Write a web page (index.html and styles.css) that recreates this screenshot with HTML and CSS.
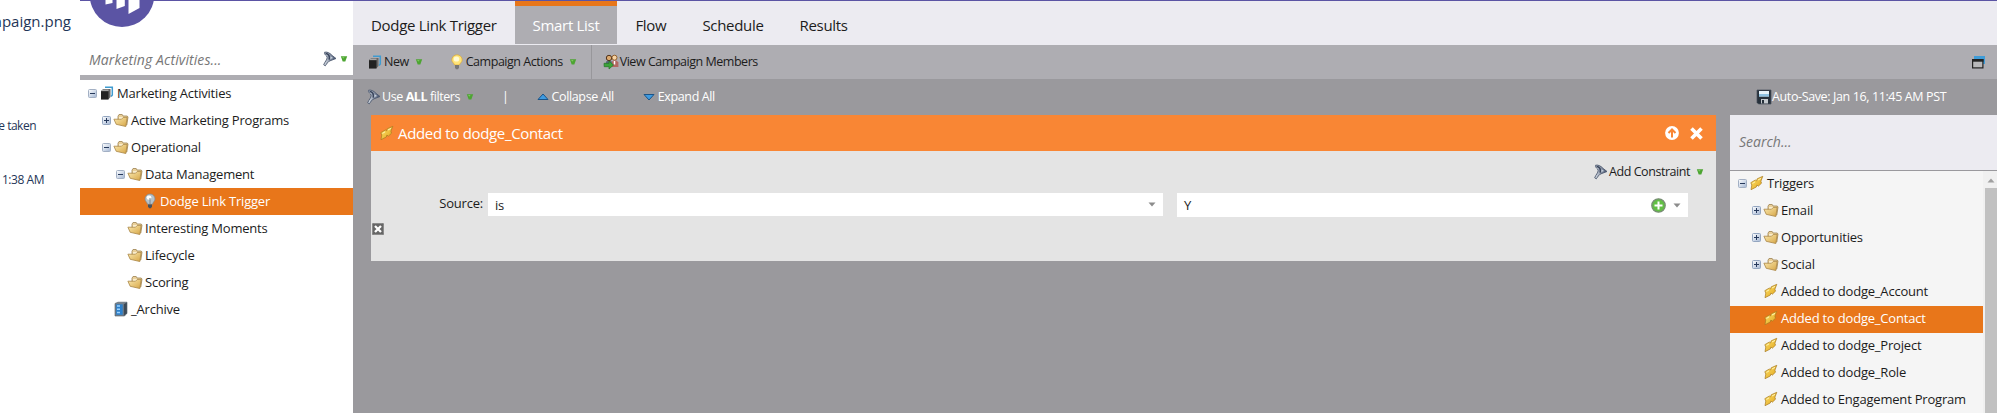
FILE: index.html
```html
<!DOCTYPE html>
<html lang="en">
<head>
<meta charset="utf-8">
<title>Dodge Link Trigger - Smart List</title>
<link rel="stylesheet" href="styles.css">
</head>
<body>
<svg width="0" height="0" class="defs">
  <defs>
    <linearGradient id="gf" x1="0" y1="0" x2="1" y2="1"><stop offset="0" stop-color="#fbeab0"/><stop offset="1" stop-color="#d6a545"/></linearGradient>
    <linearGradient id="gb" x1="0" y1="0" x2="1" y2="1"><stop offset="0" stop-color="#ffe36a"/><stop offset="1" stop-color="#dfa21c"/></linearGradient>
    <linearGradient id="ge" x1="0" y1="0" x2="1" y2="1"><stop offset="0" stop-color="#fff"/><stop offset="1" stop-color="#a3b6d3"/></linearGradient>
    <linearGradient id="gn" x1="0" y1="0" x2="1" y2="0"><stop offset="0" stop-color="#dfe5ec"/><stop offset="1" stop-color="#3c4a68"/></linearGradient>
    <symbol id="minus" viewBox="0 0 9 9"><rect x=".5" y=".5" width="8" height="8" rx="1" fill="url(#ge)" stroke="#a3b0c4"/><path d="M2 4.500h5" stroke="#26395c"/></symbol>
    <symbol id="plus" viewBox="0 0 9 9"><rect x=".5" y=".5" width="8" height="8" rx="1" fill="url(#ge)" stroke="#94a6c0"/><path d="M2 4.500h5M4.500 2v5" stroke="#26395c"/></symbol>
    <symbol id="folder" viewBox="0 0 16 16"><path d="M5 11V4.200l1-1.700h3.200l.8 1.500h4.200l.8 1-1.200 8z" fill="#ead09a" stroke="#9d8350" stroke-width=".8"/><path d="M6 5.200h7l-.5 4H6z" fill="#fff7dc"/><path d="M.9 7.200h7.600l1.700-1.700 4-.2-1.400 9.200-9.600-2.200z" fill="url(#gf)" stroke="#a98545" stroke-width=".8"/></symbol>
    <symbol id="bolt" viewBox="0 0 16 16"><path d="M13.800 1.300L8.200 3.800 7.500 5.900 6.300 5 1.800 7.700 2.800 10 2 14.700 7.300 12 7.900 10 9.300 11.200 12.500 8.200 11.900 6.200z" fill="url(#gb)" stroke="#a77a20" stroke-width=".7" stroke-linejoin="round"/><path d="M3.500 8.400l2.500-1.500M9 5l3-1.600" stroke="#fff6b8"/></symbol>
    <symbol id="book" viewBox="0 0 16 16"><path d="M6 2.200h7.300V10l-1.200 1.500" fill="none" stroke="#3f9bd0" stroke-width="1.500"/><path d="M2 6l2-2h7.500v8L9.500 14.200H2z" fill="#666"/><path d="M2 6.300h7.500v8.200H2z" fill="#222"/><path d="M3 5.200h6.500" stroke="#ddd" stroke-width=".8"/></symbol>
    <symbol id="bulb" viewBox="0 0 16 16"><path d="M8 1a5 5 0 0 0-5 5c0 2.100 2.300 3.200 2.500 5.300h5C10.700 9.200 13 8.100 13 6a5 5 0 0 0-5-5z" fill="#b8c3cb" stroke="#7d8991" stroke-width=".7"/><ellipse cx="7" cy="4.600" rx="2.400" ry="2.200" fill="#fff"/><path d="M8 5v6" stroke="#788791"/><path d="M6 11.500h4v2l-1 1.800H7l-1-1.800z" fill="#46525e"/></symbol>
    <symbol id="bulbon" viewBox="0 0 16 16"><path d="M8 .8a5.200 5.200 0 0 0-5.200 5.200c0 2.200 2.500 3.200 2.700 5h5c.2-1.800 2.700-2.800 2.700-5A5.200 5.200 0 0 0 8 .8z" fill="#ffe478" stroke="#dca832" stroke-width=".7"/><ellipse cx="7.500" cy="5" rx="2.800" ry="2.600" fill="#fffbd4"/><path d="M6 11h4v2.800l-1 1.400H7l-1-1.400z" fill="#777"/></symbol>
    <symbol id="cabinet" viewBox="0 0 16 16"><path d="M2 2.500L5 1.200h9v11L11.500 15H2z" fill="#75818d" stroke="#4d5a66" stroke-width=".6"/><path d="M10.800 3.200l3-1.600v10.600l-3 2.500z" fill="#3d4a57"/><path d="M3.200 3.300h6.500v10.500H3.200z" fill="#2c80cc"/><path d="M4 5h3M4 8.300h3M4 11.500h3" stroke="#9bd2ff" stroke-width="1.500"/></symbol>
    <symbol id="filter" viewBox="0 0 16 16"><path d="M2.600 1.200C5.500.6 8.200 2.300 10 4.400L14 7.500 8 9.800C5.800 10.600 5 12.600 3.300 14.800L1.700 13.800C2.800 10.500 5.200 9 5.200 6.200 4.800 4.300 1.800 3.800 2.600 1.200z" fill="url(#gn)" stroke="#4c586e" stroke-width=".9"/><path d="M3.600 2.300C6.300 3 8 5 7.200 8.600" fill="none" stroke="#39455c" stroke-width="1.500"/><path d="M8.600 5.200L8.300 8l2.800-.9z" fill="#c5cfda"/></symbol>
    <symbol id="drop" viewBox="0 0 8 8"><path d="M.8 1.200h6.400L5.300 6.500H2.700z" fill="#4da532"/><path d="M2 2.200h2.500L3.500 3.500z" fill="#8bd36d"/></symbol>
    <symbol id="people" viewBox="0 0 16 16"><circle cx="6" cy="4" r="2.700" fill="#dba86d" stroke="#51331d"/><circle cx="11.500" cy="3.700" r="2.500" fill="#f6d4a6" stroke="#94612b"/><path d="M8.500 13V8l2-1.500h3l1.900 1.900V13z" fill="#b26862"/><path d="M11.500 7v3.500" stroke="#fff" stroke-width="1.500"/><path d="M2 11l1.500-4h5L9 10z" fill="#596a7e"/><path d="M1 9.300h5V7l4.500 4L6 15v-2.300H1.200z" fill="#3ca43b" stroke="#257326" stroke-width=".7"/></symbol>
    <symbol id="up" viewBox="0 0 12 8"><path d="M6 1l5 5.500H1z" fill="#3f9be0" stroke="#1b5488"/></symbol>
    <symbol id="down" viewBox="0 0 12 8"><path d="M6 7l5-5.500H1z" fill="#3f9be0" stroke="#1b5488"/></symbol>
    <symbol id="disk" viewBox="0 0 16 16"><path d="M1 1h14v14H2.500L1 13.500z" fill="#27313b" stroke="#48525c" stroke-width=".7"/><path d="M3 2h10v5.500H3z" fill="#e7f3fa"/><path d="M3 5h10v2.500H3z" fill="#8fc2e2"/><path d="M5 10h7v4.500H5z" fill="#c4c9cd"/><path d="M6 11h2v3.500H6z" fill="#27313b"/></symbol>
    <symbol id="grey" viewBox="0 0 8 5"><path d="M.5 .5h7L4 4.500z" fill="#8c8c8c"/></symbol>
  </defs>
</svg>
<div class="app">
  <div class="behind">
    <div class="file">mpaign.png</div>
    <div class="taken">e taken</div>
    <div class="time">1:38 AM</div>
  </div>

  <aside class="sidebar">
    <div class="logo"><svg width="66" height="27" viewBox="0 0 66 27"><circle cx="33" cy="-5.500" r="32.400" fill="#5b54a4"/><path d="M16.500 0h7v3l-7 1.500zM27.500 0h8.300v6l-8.300 3zM39.500 0h11v8L39.500 14z" fill="#fff"/></svg></div>
    <div class="find"><span class="ph">Marketing Activities...</span><svg class="i16"><use href="#filter"/></svg><svg class="i8"><use href="#drop"/></svg></div>
    <div class="tree">
      <div class="row d0"><svg class="ex"><use href="#minus"/></svg><svg class="i16"><use href="#book"/></svg><span>Marketing Activities</span></div>
      <div class="row d1"><svg class="ex"><use href="#plus"/></svg><svg class="i16"><use href="#folder"/></svg><span>Active Marketing Programs</span></div>
      <div class="row d1"><svg class="ex"><use href="#minus"/></svg><svg class="i16"><use href="#folder"/></svg><span>Operational</span></div>
      <div class="row d2"><svg class="ex"><use href="#minus"/></svg><svg class="i16"><use href="#folder"/></svg><span>Data Management</span></div>
      <div class="row d3 sel"><svg class="ex"></svg><svg class="i16"><use href="#bulb"/></svg><span>Dodge Link Trigger</span></div>
      <div class="row d2"><svg class="ex"></svg><svg class="i16"><use href="#folder"/></svg><span>Interesting Moments</span></div>
      <div class="row d2"><svg class="ex"></svg><svg class="i16"><use href="#folder"/></svg><span>Lifecycle</span></div>
      <div class="row d2"><svg class="ex"></svg><svg class="i16"><use href="#folder"/></svg><span>Scoring</span></div>
      <div class="row d1"><svg class="ex"></svg><svg class="i16"><use href="#cabinet"/></svg><span>_Archive</span></div>
    </div>
  </aside>

  <main class="main">
    <nav class="tabs">
      <div class="tab">Dodge Link Trigger</div>
      <div class="tab active">Smart List</div>
      <div class="tab">Flow</div>
      <div class="tab">Schedule</div>
      <div class="tab">Results</div>
    </nav>
    <div class="toolbar">
      <div class="btn new"><svg class="i16"><use href="#book"/></svg><span>New</span><svg class="i8"><use href="#drop"/></svg></div>
      <div class="btn actions"><svg class="i16"><use href="#bulbon"/></svg><span>Campaign Actions</span><svg class="i8"><use href="#drop"/></svg></div>
      <div class="btn members"><svg class="i16"><use href="#people"/></svg><span>View Campaign Members</span></div>
      <svg class="win" width="14" height="13" viewBox="0 0 14 13"><path d="M2 0h11v8h-2V3H2z" fill="#3f9cd8"/><rect x=".6" y="3.600" width="10.300" height="8.300" fill="#b8b8ba" stroke="#222" stroke-width="1.200"/><path d="M0 3h11.500v2.700H0z" fill="#222"/></svg>
    </div>
    <div class="content">
      <section class="canvas">
        <div class="filters">
          <svg class="i16"><use href="#filter"/></svg><span class="use">Use <b>ALL</b> filters</span><svg class="i8"><use href="#drop"/></svg>
          <span class="bar">|</span>
          <svg class="arrow"><use href="#up"/></svg><span class="collapse">Collapse All</span>
          <svg class="arrow"><use href="#down"/></svg><span>Expand All</span>
        </div>
        <div class="card">
          <div class="card-head">
            <svg class="i16"><use href="#bolt"/></svg><span class="title">Added to dodge_Contact</span>
            <svg width="14" height="14" viewBox="0 0 14 14"><circle cx="7" cy="7" r="6.900" fill="#fff"/><path d="M7 11.500V4M3.500 7L7 3.500 10.500 7" fill="none" stroke="#f98634" stroke-width="2"/></svg>
            <svg width="13" height="13" viewBox="0 0 13 13"><path d="M1.500 1.500l10 10M11.500 1.500l-10 10" stroke="#fff" stroke-width="3.600"/></svg>
          </div>
          <div class="card-body">
            <div class="constraint"><svg class="i16"><use href="#filter"/></svg><span>Add Constraint</span><svg class="i8"><use href="#drop"/></svg></div>
            <div class="fields">
              <label>Source:</label>
              <div class="combo op"><span>is</span><svg class="caret"><use href="#grey"/></svg></div>
              <div class="combo val"><span>Y</span><svg width="15" height="15" viewBox="0 0 15 15"><circle cx="7.500" cy="7.500" r="6.700" fill="#62bf45" stroke="#788e74" stroke-width="1.300"/><path d="M7.500 3.500v8M3.500 7.500h8" stroke="#fff" stroke-width="2"/></svg><svg class="caret"><use href="#grey"/></svg></div>
            </div>
            <svg class="remove" width="12" height="12" viewBox="0 0 12 12"><rect width="12" height="12" rx="1.500" fill="#666"/><rect x=".5" y=".5" width="11" height="11" rx="1" fill="none" stroke="#8b8b8b"/><path d="M3 3l6 6M9 3L3 9" stroke="#fff" stroke-width="2.300"/></svg>
          </div>
        </div>
      </section>
      <aside class="palette">
        <div class="saved"><svg class="i16"><use href="#disk"/></svg><span>Auto-Save: Jan 16, 11:45 AM PST</span></div>
        <div class="search">Search...</div>
        <div class="list">
          <div class="tree">
            <div class="row d0"><svg class="ex"><use href="#minus"/></svg><svg class="i16"><use href="#bolt"/></svg><span>Triggers</span></div>
            <div class="row d1"><svg class="ex"><use href="#plus"/></svg><svg class="i16"><use href="#folder"/></svg><span>Email</span></div>
            <div class="row d1"><svg class="ex"><use href="#plus"/></svg><svg class="i16"><use href="#folder"/></svg><span>Opportunities</span></div>
            <div class="row d1"><svg class="ex"><use href="#plus"/></svg><svg class="i16"><use href="#folder"/></svg><span>Social</span></div>
            <div class="row d1"><svg class="ex"></svg><svg class="i16"><use href="#bolt"/></svg><span>Added to dodge_Account</span></div>
            <div class="row d1 sel"><svg class="ex"></svg><svg class="i16"><use href="#bolt"/></svg><span>Added to dodge_Contact</span></div>
            <div class="row d1"><svg class="ex"></svg><svg class="i16"><use href="#bolt"/></svg><span>Added to dodge_Project</span></div>
            <div class="row d1"><svg class="ex"></svg><svg class="i16"><use href="#bolt"/></svg><span>Added to dodge_Role</span></div>
            <div class="row d1"><svg class="ex"></svg><svg class="i16"><use href="#bolt"/></svg><span>Added to Engagement Program</span></div>
          </div>
          <div class="scroll"><svg width="8" height="5" viewBox="0 0 8 5"><path d="M4 .5L7.500 4.500h-7z" fill="#a0a0a0"/></svg><div class="thumb"></div></div>
        </div>
      </aside>
    </div>
  </main>
</div>
</body>
</html>
```
FILE: styles.css
```css
* { box-sizing: border-box; }
body { margin: 0; background: #fff; color: #1c1c1c; font: 13px/18px "Open Sans", "Noto Sans", sans-serif; letter-spacing: -.2px; overflow: hidden; }
svg { display: block; flex: none; }
.defs { position: absolute; }
.app { display: flex; width: 1997px; height: 413px; overflow: hidden; white-space: nowrap; }
.i16 { width: 16px; height: 16px; }
.i8 { width: 8px; height: 8px; }
.ex { width: 9px; height: 9px; }
.arrow { width: 12px; height: 8px; }
.caret { width: 8px; height: 5px; }

.behind { width: 80px; flex: none; display: flex; flex-direction: column; align-items: flex-end; overflow: hidden; color: #1f3658; letter-spacing: 0; }
.file { font-size: 15px; line-height: 20px; padding: 11px 9px 0 0; }
.taken { font-size: 12px; padding: 86px 44px 0 0; letter-spacing: -.5px; }
.time { font-size: 12px; padding: 36px 36px 0 0; letter-spacing: -.45px; }

.sidebar { width: 273px; flex: none; border-top: 1px solid #5b54a4; }
.logo { height: 44px; padding-left: 9px; }
.logo svg { margin-top: -1px; }
.find { height: 36px; display: flex; align-items: center; padding: 0 5px 2px 9px; border-bottom: 5px solid #aeadb2; }
.ph { flex: 1; font-size: 14px; font-style: italic; color: #777; letter-spacing: .1px; padding-top: 2px; }
.find .i8 { margin-left: 2px; }

.row { height: 27px; display: flex; align-items: center; gap: 2px; padding-bottom: 1px; }
.d0 { padding-left: 8px; }
.d1 { padding-left: 22px; }
.d2 { padding-left: 36px; }
.d3 { padding-left: 51px; }
.sel { background: #e8761a; color: #fff; }

.main { flex: 1; display: flex; flex-direction: column; }
.tabs { height: 45px; display: flex; background: #ecebf1; border-top: 1px solid #5b54a4; padding-bottom: 1px; font-size: 15px; line-height: 20px; letter-spacing: -.31px; }
.tab { padding: 14px 18px 0; }
.tab.active { background: #aeadb2; color: #fff; border-top: 5px solid #e8761a; padding-top: 9px; }
.toolbar, .filters, .constraint, .saved { font-size: 12.5px; letter-spacing: -.38px; }
.toolbar { height: 34px; display: flex; align-items: center; background: #aeadb2; letter-spacing: -.47px; }
.btn { display: flex; align-items: center; height: 34px; padding-bottom: 1px; }
.btn .i8 { margin-left: 6px; }
.new { padding-left: 14px; }
.btn span { margin-left: 1px; }
.actions { margin-left: 26px; padding-right: 14px; border-right: 1px solid #98979b; }
.members { padding-left: 11px; }
.win { margin: 0 11px 0 auto; }
.content { flex: 1; display: flex; background: #9a999d; }

.canvas { width: 1377px; flex: none; padding-left: 18px; }
.filters { height: 36px; display: flex; align-items: center; color: #fff; margin-left: -5px; padding-bottom: 1px; }
.use { letter-spacing: -.42px; }
.filters .i8 { margin-left: 6px; }
.bar { margin: 0 28px 0 28px; }
.arrow { margin-right: 3px; }
.collapse { margin-right: 29px; }
.card { width: 1345px; }
.card-head { height: 36px; display: flex; align-items: center; gap: 11px; padding: 0 13px 0 8px; background: #f98634; color: #fff; font-size: 15px; letter-spacing: -.33px; }
.title { flex: 1; margin-left: -8px; }
.card-body { height: 110px; background: #e4e4e4; }
.constraint { height: 42px; display: flex; justify-content: flex-end; align-items: center; padding: 0 12px 1px 0; }
.constraint span { letter-spacing: -.45px; }
.constraint .i8 { margin-left: 6px; }
.fields { height: 24px; display: flex; align-items: flex-start; }
.fields label { width: 117px; text-align: right; padding: 1px 5px 0 0; }
.combo { display: flex; align-items: center; gap: 7px; padding: 0 7px; background: #fff; }
.combo span { flex: 1; }
.op { width: 675px; height: 23px; }
.val { width: 511px; height: 24px; margin-left: 14px; }
.remove { margin: 6px 0 0 1px; }

.palette { flex: 1; display: flex; flex-direction: column; }
.saved { height: 36px; display: flex; align-items: center; color: #fff; padding: 0 0 1px 26px; }
.search { height: 56px; background: #ecebf1; border-bottom: 1px solid #9a999d; padding: 18px 9px; font-size: 14px; font-style: italic; color: #777; letter-spacing: 0; }
.list { height: 242px; display: flex; background: #f5f5f5; overflow: hidden; }
.list .tree { width: 253px; }
.list .row { padding-bottom: 3px; }
.scroll { width: 14px; padding: 7px 0 0 2px; background: #f0f0f0; }
.scroll svg { margin-left: 2px; }
.thumb { height: 226px; margin-top: 5px; background: #c1c1c1; }
```
